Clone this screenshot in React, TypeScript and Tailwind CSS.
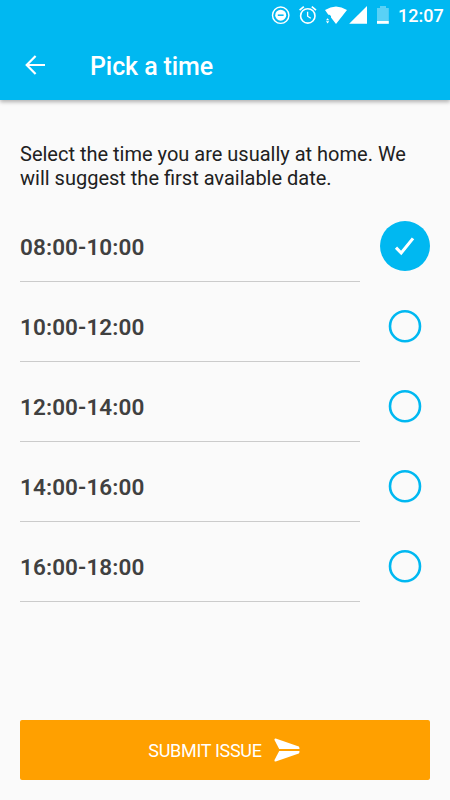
import React from "react";

const slots = ["08:00-10:00", "10:00-12:00", "12:00-14:00", "14:00-16:00", "16:00-18:00"];

function StatusBar() {
  return (
    <div className="flex h-8 items-center justify-end pr-2">
      <svg width="126" height="32" viewBox="266 0 126 32" fill="none" className="mr-[6px] shrink-0">
        <circle cx="280.7" cy="15.2" r="8.2" stroke="white" strokeWidth="1.4" />
        <circle cx="280.7" cy="15.2" r="5.5" fill="white" />
        <path d="M277.8 15.2h5.8" stroke="#00b8f1" strokeWidth="1.5" />
        <circle cx="307.8" cy="15.9" r="7.2" stroke="white" strokeWidth="1.6" />
        <path d="M307.6 11.8v4.4l3.2 2" stroke="white" strokeWidth="1.3" />
        <path d="M299.6 10.2l4.2-3.6M316 10.2l-4.2-3.6" stroke="white" strokeWidth="1.7" />
        <path d="M325 10Q336 2.8 347 10L336 24L331 17.6V16L329.5 14.8H328.3Z" fill="white" />
        <path d="M327.6 18.2l1.6 2.1h-3.2zM327.6 23.4l1.6-2.1h-3.2z" fill="white" />
        <path d="M367 6v17.8h-17.8z" fill="white" />
        <path d="M380 6h6v2h2.8v13H377V8h3z" fill="white" fillOpacity=".35" />
        <path d="M377 21h11.8v2.8H377z" fill="white" />
      </svg>
      <span className="w-[44px] whitespace-nowrap text-[18px] font-medium leading-8">12:07</span>
    </div>
  );
}

function Choice({ selected }: { selected: boolean }) {
  return (
    <button className="flex h-[50px] w-[50px] shrink-0 items-center justify-center" aria-pressed={selected}>
      {selected ? (
        <span className="flex h-[50px] w-[50px] items-center justify-center rounded-full bg-[#00b8f1]">
          <svg width="50" height="50" viewBox="0 0 50 50" fill="none">
            <path d="M16 26.7l5.2 5.3L33 17.4" stroke="white" strokeWidth="3.1" />
          </svg>
        </span>
      ) : (
        <svg width="50" height="50" viewBox="0 0 50 50" fill="none">
          <circle cx="25" cy="25.2" r="15" stroke="#00b8f1" strokeWidth="2.6" />
        </svg>
      )}
    </button>
  );
}

export default function App() {
  const [selected, setSelected] = React.useState(0);
  return (
    <div className="flex h-[800px] w-[450px] flex-col overflow-hidden bg-[#fafafa] font-['Roboto',sans-serif]">
      <header className="h-[100px] shrink-0 bg-[#00b8f1] text-white shadow-[0_2px_4px_rgba(0,0,0,0.3)]">
        <StatusBar />
        <div className="flex h-[68px] items-center pl-[25px]">
          <svg width="20" height="20" viewBox="0 0 20 20" fill="none" className="-mt-[2px]">
            <path d="M10.6 .9L1.7 10l8.9 9.1M1.7 10H20" stroke="white" strokeWidth="2.2" />
          </svg>
          <h1 className="ml-[45px] pt-[2px] text-[25px] font-medium leading-8 tracking-[-0.1px]">Pick a time</h1>
        </div>
      </header>
      <main className="flex flex-1 flex-col px-5 pb-5 pt-[42px]">
        <p className="whitespace-nowrap text-[20px] leading-6 text-[#212121]">
          Select the time you are usually at home. We
          <br />
          will suggest the first available date.
        </p>
        <ul className="mt-[12px]">
          {slots.map((slot, i) => (
            <li key={slot} className="flex h-20 items-end justify-between" onClick={() => setSelected(i)}>
              <div className="flex h-20 w-[340px] items-center border-b border-[#cbcbcb] pt-[12px] text-[22.5px] font-semibold leading-[33px] tracking-[0.1px] text-[#404040]">
                {slot}
              </div>
              <div className="pb-[11px]">
                <Choice selected={i === selected} />
              </div>
            </li>
          ))}
        </ul>
        <button className="mt-auto flex h-[60px] items-center justify-center rounded-[2px] bg-[#ffa000] pr-[2px] text-white">
          <span className="text-[18px] tracking-[-0.3px]">SUBMIT ISSUE</span>
          <svg width="26" height="24" viewBox="0 0 26 24" className="ml-3" fill="white">
            <path d="M1.7.4L24.8 8.4Q25.5 8.9 25.5 10.9H5.2L.5 2Q0 .2 1.7.4z" />
            <path d="M1.7 23.6L24.8 15.6Q25.5 15.1 25.5 13.1H5.2L.5 22Q0 23.8 1.7 23.6z" />
          </svg>
        </button>
      </main>
    </div>
  );
}
